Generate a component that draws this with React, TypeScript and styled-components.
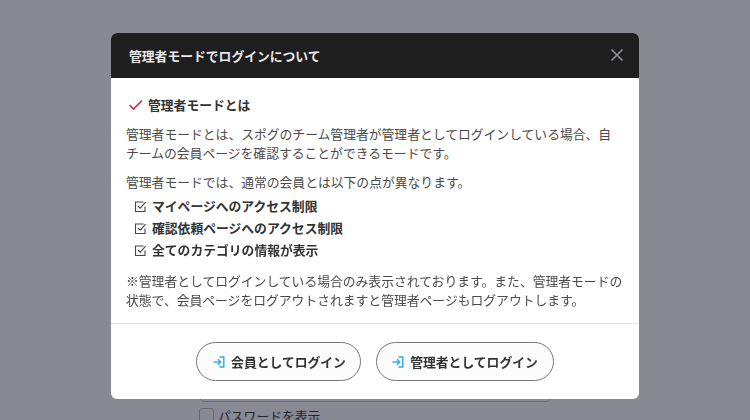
import React from "react";
import styled, { createGlobalStyle } from "styled-components";

const Global = createGlobalStyle`
  html, body { margin: 0; padding: 0; width: 750px; height: 420px; overflow: hidden; background: #fff; }
  body { font-family: "Noto Sans CJK JP", "Noto Sans", sans-serif; font-size: 12.8px; color: #333; }
`;

const Page = styled.div`
  width: 750px;
  height: 420px;
  overflow: hidden;
  display: flex;
  flex-direction: column;
  align-items: center;
  justify-content: flex-end;
`;

const Behind = styled.div`
  width: 352px;
  display: flex;
  flex-direction: column;
  gap: 6px;
`;

const BehindInput = styled.div`
  height: 20px;
  border: 1px solid #c8c8c8;
  border-radius: 5px;
`;

const ShowPassword = styled.label`
  display: flex;
  align-items: center;
  gap: 4px;
  height: 15px;
  margin-bottom: -3px;
  font-size: 12.8px;
  color: #333;
`;

const BehindBox = styled.span`
  width: 13px;
  height: 13px;
  border: 1px solid #bbb;
  border-radius: 3px;
  background: #fff;
`;

const Overlay = styled.div`
  position: fixed;
  inset: 0;
  background: rgba(17, 20, 40, 0.5);
`;

const Modal = styled.div`
  position: fixed;
  left: 111px;
  top: 33px;
  width: 528px;
  height: 366px;
  display: flex;
  flex-direction: column;
  background: #fff;
  border-radius: 6px;
  overflow: hidden;
`;

const Header = styled.header`
  height: 44px;
  flex: none;
  display: flex;
  align-items: center;
  justify-content: space-between;
  padding: 0 15px 1px 18px;
  background: #1e1e1e;
`;

const Title = styled.h2`
  margin: 0;
  font-size: 12.8px;
  font-weight: 700;
  color: #e8e8e8;
`;

const Close = styled.button`
  display: flex;
  width: 14px;
  height: 14px;
  padding: 0;
  border: 0;
  background: none;
  color: #8f929c;
`;

const Body = styled.div`
  flex: 1;
  padding: 17px 15px 0;
  line-height: 19px;
  color: #4a4a4a;
`;

const Heading = styled.h3`
  display: flex;
  align-items: center;
  gap: 4px;
  margin: 0 0 10px 2px;
  font-size: 12.8px;
  font-weight: 700;
  color: #333;
  line-height: 19px;
`;

const Para = styled.p`
  margin: 0 0 ${(p: { $gap: number }) => p.$gap}px;
`;

const List = styled.ul`
  display: flex;
  flex-direction: column;
  gap: 2px;
  list-style: none;
  margin: 0 0 11px 8px;
  padding: 0;
`;

const Item = styled.li`
  display: flex;
  align-items: center;
  gap: 5px;
  font-weight: 700;
  color: #333;
  line-height: 20px;
`;

const Footer = styled.footer`
  height: 76px;
  flex: none;
  display: flex;
  align-items: flex-start;
  justify-content: center;
  gap: 15px;
  padding-top: 18px;
  box-sizing: border-box;
  border-top: 1px solid #e4e4e4;
`;

const LoginButton = styled.button`
  display: flex;
  align-items: center;
  justify-content: center;
  gap: 6px;
  height: 39px;
  width: ${(p: { $w: number; $pad: number }) => p.$w}px;
  padding: 0 0 0 ${(p: { $w: number; $pad: number }) => p.$pad}px;
  box-sizing: border-box;
  border: 1px solid #777;
  border-radius: 20px;
  background: #fcfcfc;
  font-family: inherit;
  font-size: 12.8px;
  font-weight: 700;
  color: #333;
`;

const Check = () => (
  <svg width="16" height="12" viewBox="0 0 16 12" fill="none" stroke="#d9293e" strokeWidth="1.7">
    <path d="M1.5 6 L5.5 10 L14 1.5" />
  </svg>
);

const CheckBox = () => (
  <svg width="13" height="13" viewBox="0 0 13 13" fill="none" stroke="#444" strokeWidth="1.1">
    <path d="M11 6.5 V11.5 H1.5 V2 H9.5" />
    <path d="M3.8 5.8 L6.2 8.2 L11.6 2.2" />
  </svg>
);

const LoginIcon = () => (
  <svg width="12" height="12" viewBox="0 0 12 12" fill="none" stroke="#2fa9e8" strokeWidth="1.4">
    <path d="M6.5 1 H10.8 V11 H6.5" />
    <path d="M0.5 6 H7.5" />
    <path d="M5 3.2 L7.8 6 L5 8.8" />
  </svg>
);

export default function App() {
  return (
    <>
      <Global />
      <Page>
        <Behind>
          <BehindInput />
          <ShowPassword>
            <BehindBox />
            パスワードを表示
          </ShowPassword>
        </Behind>
        <Overlay />
        <Modal>
          <Header>
            <Title>管理者モードでログインについて</Title>
            <Close aria-label="閉じる">
              <svg width="14" height="14" viewBox="0 0 14 14" fill="none" stroke="currentColor" strokeWidth="1.6">
                <path d="M1.5 1.5 L12.5 12.5 M12.5 1.5 L1.5 12.5" />
              </svg>
            </Close>
          </Header>
          <Body>
            <Heading>
              <Check />
              管理者モードとは
            </Heading>
            <Para $gap={10}>
              管理者モードとは、スポグのチーム管理者が管理者としてログインしている場合、自
              <br />
              チームの会員ページを確認することができるモードです。
            </Para>
            <Para $gap={5}>管理者モードでは、通常の会員とは以下の点が異なります。</Para>
            <List>
              <Item><CheckBox />マイページへのアクセス制限</Item>
              <Item><CheckBox />確認依頼ページへのアクセス制限</Item>
              <Item><CheckBox />全てのカテゴリの情報が表示</Item>
            </List>
            <Para $gap={0}>
              ※管理者としてログインしている場合のみ表示されております。また、管理者モードの状態で、会員ページをログアウトされますと管理者ページもログアウトします。
            </Para>
          </Body>
          <Footer>
            <LoginButton $w={165} $pad={2}><LoginIcon />会員としてログイン</LoginButton>
            <LoginButton $w={178} $pad={0}><LoginIcon />管理者としてログイン</LoginButton>
          </Footer>
        </Modal>
      </Page>
    </>
  );
}
